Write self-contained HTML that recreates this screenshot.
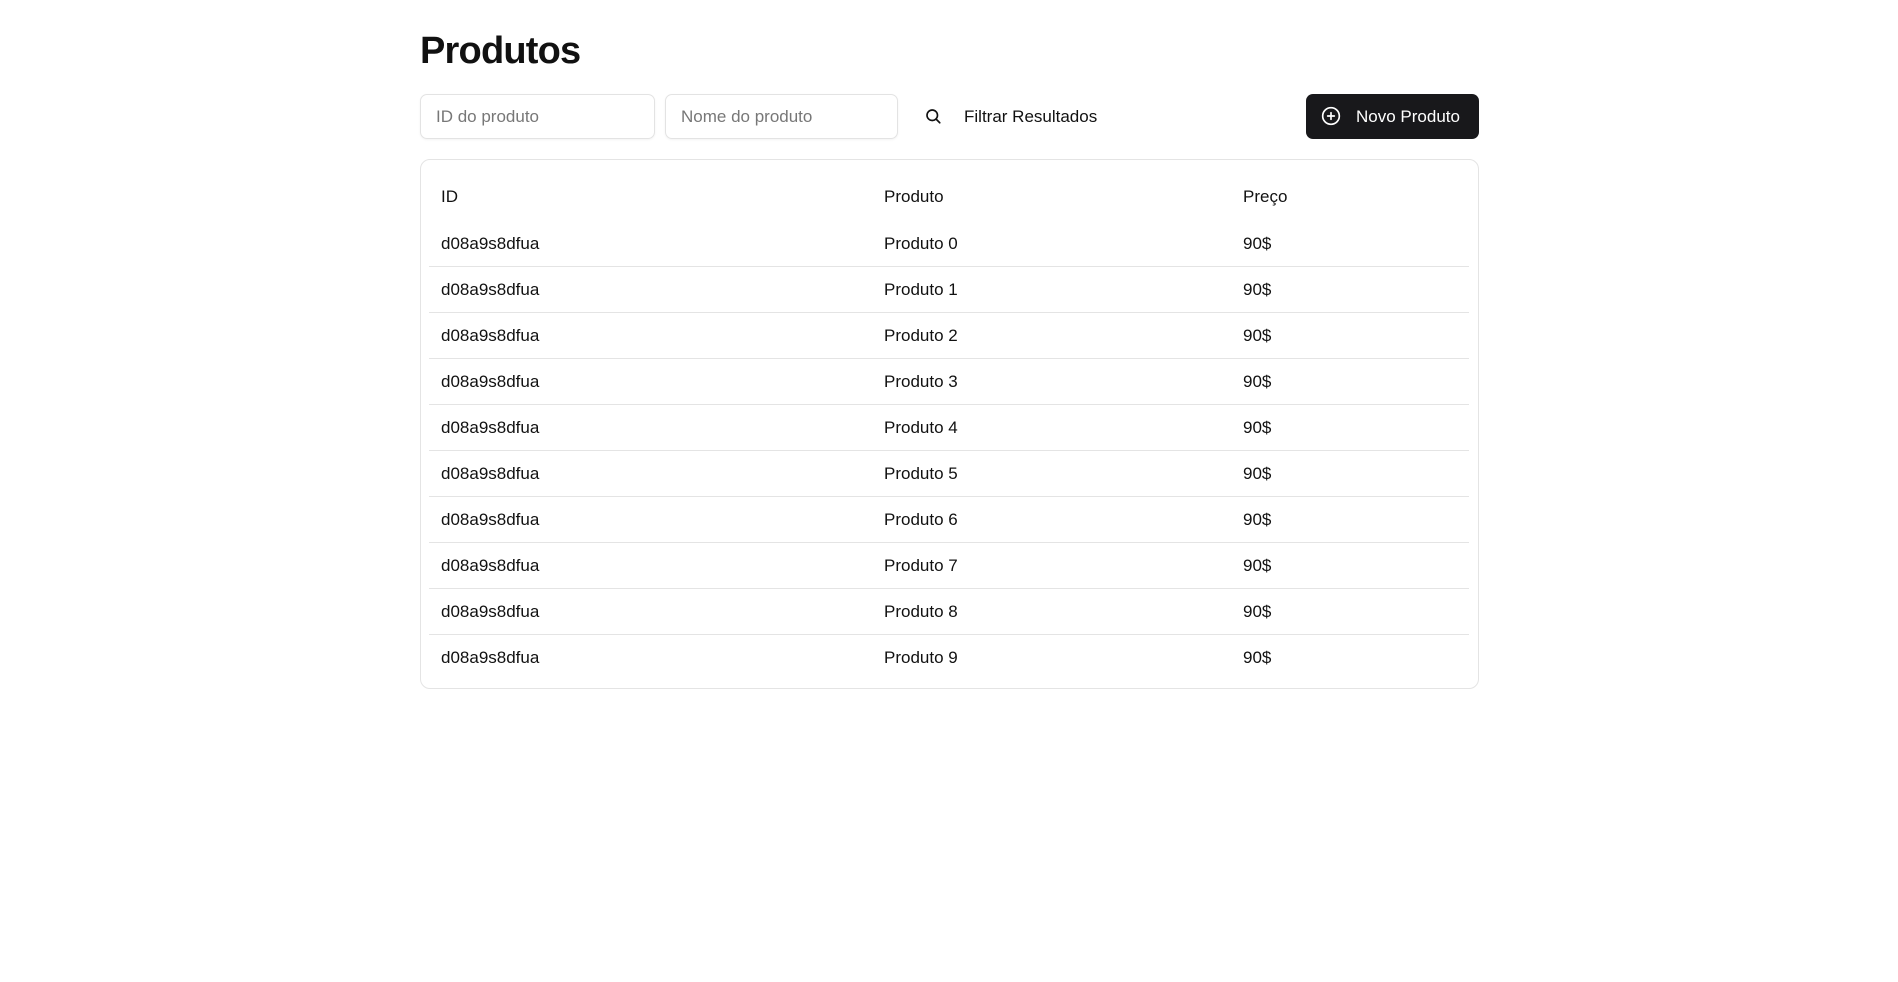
<!DOCTYPE html>
<html><head><meta charset="utf-8"><style>
*{box-sizing:border-box;margin:0;padding:0}
body{width:1898px;height:982px;background:#fff;font-family:"Liberation Sans",sans-serif;color:#111;position:relative;overflow:hidden}
h1{position:absolute;left:420px;top:30px;font-size:38px;font-weight:700;letter-spacing:-0.8px}
.inp{position:absolute;top:94px;height:45px;border:1px solid #e3e3e3;border-radius:7px;box-shadow:0 1px 2px rgba(0,0,0,.05);font-size:17px;color:#777;padding-left:15px;line-height:43px}
.filt{position:absolute;left:964px;top:94px;line-height:45px;font-size:17px}
.btn{position:absolute;left:1306px;top:94px;width:173px;height:45px;background:#18181b;border-radius:7px;color:#fff;font-size:17px;line-height:45px;padding-left:50px}
.card{position:absolute;left:420px;top:159px;width:1059px;height:530px;border:1px solid #e4e4e4;border-radius:10px}
.row{position:absolute;left:8px;right:9px;height:46px;border-bottom:1px solid #e4e4e4;font-size:17px;line-height:45px}
.row span{position:absolute}
.c1{left:12px}.c2{left:455px}.c3{left:814px}
</style></head><body>
<h1>Produtos</h1>
<div class="inp" style="left:420px;width:235px">ID do produto</div>
<div class="inp" style="left:665px;width:233px">Nome do produto</div>
<svg style="position:absolute;left:924px;top:107px" width="18" height="18" viewBox="0 0 24 24" fill="none" stroke="#111" stroke-width="2.2" stroke-linecap="round"><circle cx="11" cy="11" r="7"/><path d="M16 16l5 5"/></svg>
<div class="filt">Filtrar Resultados</div>
<div class="btn"><svg style="position:absolute;left:15px;top:12px" width="20" height="20" viewBox="0 0 24 24" fill="none" stroke="#fff" stroke-width="2" stroke-linecap="round"><circle cx="12" cy="12" r="10"/><path d="M12 8v8M8 12h8"/></svg>Novo Produto</div>
<div class="card">
<div class="row" style="top:14px;border:none"><span class="c1">ID</span><span class="c2">Produto</span><span class="c3">Preço</span></div>
<div class="row" style="top:61px"><span class="c1">d08a9s8dfua</span><span class="c2">Produto 0</span><span class="c3">90$</span></div>
<div class="row" style="top:107px"><span class="c1">d08a9s8dfua</span><span class="c2">Produto 1</span><span class="c3">90$</span></div>
<div class="row" style="top:153px"><span class="c1">d08a9s8dfua</span><span class="c2">Produto 2</span><span class="c3">90$</span></div>
<div class="row" style="top:199px"><span class="c1">d08a9s8dfua</span><span class="c2">Produto 3</span><span class="c3">90$</span></div>
<div class="row" style="top:245px"><span class="c1">d08a9s8dfua</span><span class="c2">Produto 4</span><span class="c3">90$</span></div>
<div class="row" style="top:291px"><span class="c1">d08a9s8dfua</span><span class="c2">Produto 5</span><span class="c3">90$</span></div>
<div class="row" style="top:337px"><span class="c1">d08a9s8dfua</span><span class="c2">Produto 6</span><span class="c3">90$</span></div>
<div class="row" style="top:383px"><span class="c1">d08a9s8dfua</span><span class="c2">Produto 7</span><span class="c3">90$</span></div>
<div class="row" style="top:429px"><span class="c1">d08a9s8dfua</span><span class="c2">Produto 8</span><span class="c3">90$</span></div>
<div class="row" style="top:475px;border:none"><span class="c1">d08a9s8dfua</span><span class="c2">Produto 9</span><span class="c3">90$</span></div>
</div>
</body></html>
